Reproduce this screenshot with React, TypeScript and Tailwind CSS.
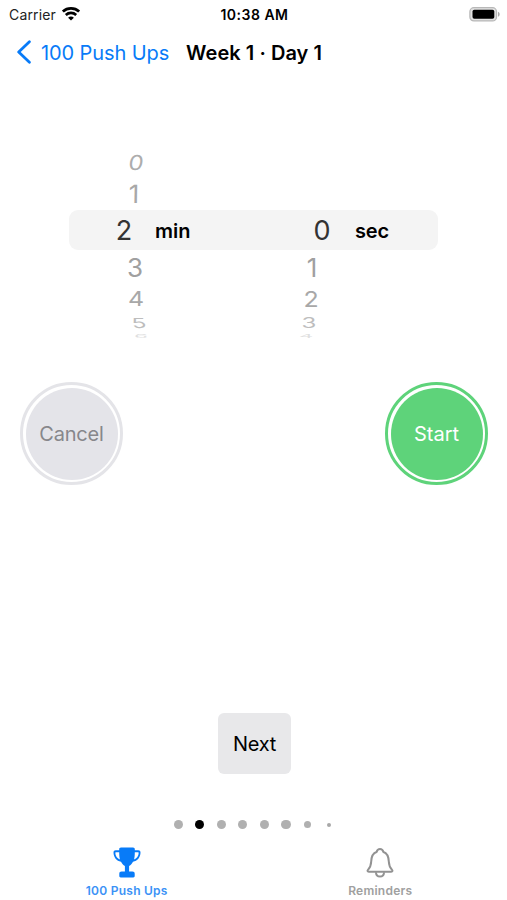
const wheel = [
  { row: "h-[32px] text-[24px] text-[#adadad]", min: "0", minAt: "ml-[126px] translate-y-px scale-y-[0.86] -skew-x-[7deg]", sec: "", secAt: "ml-[302px]" },
  { row: "h-[32px] text-[26px] text-[#a8a8a8]", min: "1", minAt: "ml-[124px] scale-y-[0.96] -skew-x-[1deg]", sec: "", secAt: "ml-[302px]" },
];

const lowerWheel = [
  { row: "h-[34px] text-[26px] text-[#a0a0a0]", min: "3", minAt: "ml-[125px] translate-y-px scale-y-[0.96]", sec: "1", secAt: "ml-[157px] translate-y-px scale-y-[0.96]" },
  { row: "h-[30px] text-[25px] text-[#a8a8a8]", min: "4", minAt: "ml-[126px] scale-y-[0.82]", sec: "2", secAt: "ml-[155px] scale-y-[0.84]" },
  { row: "h-[17px] text-[24px] text-[#bdbdbd]", min: "5", minAt: "ml-[129px] scale-y-[0.58] skew-x-[6deg]", sec: "3", secAt: "ml-[150px] scale-y-[0.58]" },
  { row: "h-[10px] text-[22px] text-[#e0e0e0]", min: "6", minAt: "ml-[131px] scale-y-[0.22]", sec: "4", secAt: "ml-[145px] scale-y-[0.22]" },
];

const dots = [
  "ml-0 size-[9px] bg-[#b0b0b0]",
  "ml-[12px] size-[9.5px] bg-black",
  "ml-[12.5px] size-[9px] bg-[#b0b0b0]",
  "ml-[12.5px] size-[9px] bg-[#b0b0b0]",
  "ml-[12.5px] size-[9px] bg-[#b0b0b0]",
  "ml-[12.5px] size-[9.5px] bg-[#b0b0b0]",
  "ml-[13px] size-[7px] bg-[#b0b0b0]",
  "ml-[16px] size-[4px] bg-[#a8a8a8]",
];

function WheelRow({ item }: { item: (typeof wheel)[number] }) {
  return (
    <div className={`flex items-center leading-none ${item.row}`}>
      <span className={`block w-5 text-center ${item.minAt}`}>{item.min}</span>
      <span className={`block w-5 text-center ${item.secAt}`}>{item.sec}</span>
    </div>
  );
}

function Wifi() {
  return (
    <svg width="18" height="14" viewBox="0 0 18 14" fill="none" stroke="black" strokeWidth="2.7">
      <path d="M.9 4.600C5.300.4 12.700.4 17.100 4.600" />
      <path d="M3.800 7.900c3-2.700 7.400-2.700 10.400 0" />
      <path d="M9 13.500 6.100 10.700c1.700-1.500 4.100-1.500 5.800 0Z" fill="black" stroke="none" />
    </svg>
  );
}

function Battery() {
  return (
    <svg width="31" height="15" viewBox="0 0 31 15">
      <rect x=".9" y=".7" width="26.6" height="13.2" rx="4" fill="#e2e2e2" stroke="#b8b8b8" strokeWidth="1.3" />
      <rect x="3.500" y="2.800" width="21.800" height="9" rx="1.800" fill="black" />
      <path d="M29 4.800c2.200.8 2.200 4.200 0 5Z" fill="#ababab" />
    </svg>
  );
}

function Trophy() {
  return (
    <svg width="28" height="31" viewBox="0 0 28 31" fill="#087bf8">
      <path d="M8 .5h12c1.200 0 1.800.7 1.800 1.800v1h3.500c1.400 0 2.200.8 2.200 2.200 0 4.600-3.100 8.700-7.500 9.200-1 1.900-2.200 3.300-3.900 4.200v5.600h3.300c1.500 0 2.300.8 2.300 2.300v2.300c0 .9-.5 1.400-1.400 1.400H7.700c-.9 0-1.400-.5-1.400-1.400v-2.300c0-1.500.8-2.300 2.300-2.300h3.300v-5.600C10.200 18 9 16.600 8 14.700 3.600 14.200.5 10.100.5 5.500c0-1.400.8-2.200 2.200-2.200h3.500v-1C6.200 1.200 6.800.5 8 .5ZM6.200 5.200H2.900c-.4 0-.6.2-.6.600 0 3.200 2 5.900 4.700 6.800-.6-2-.8-4.500-.8-7.400Zm15.600 0c0 2.900-.2 5.400-.8 7.400 2.700-.9 4.700-3.600 4.700-6.800 0-.4-.2-.6-.6-.6Z" />
    </svg>
  );
}

function Bell() {
  return (
    <svg width="28" height="30" viewBox="0 0 28 30" fill="none" stroke="#929292" strokeWidth="2" strokeLinejoin="round">
      <path d="M2.800 23.800h22.400c1.400 0 1.700-1.200.7-2.200-2.200-2.200-2.900-4.100-3.100-8.100-.2-5-1.600-8.300-5.400-9.500C16.900 2.200 15.800 1 14 1s-2.900 1.200-3.400 3C6.800 5.200 5.400 8.500 5.200 13.500c-.2 4-.9 5.900-3.100 8.100-1 1-.7 2.200.7 2.200Z" />
      <path d="M9.900 24.200c.2 2.800 1.800 4.400 4.100 4.400s3.900-1.600 4.100-4.400" />
    </svg>
  );
}

export default function App() {
  return (
    <main className="flex h-[900px] w-[507px] flex-col overflow-hidden bg-white font-['Inter',sans-serif] text-black">
      <header>
        <div className="grid h-7 grid-cols-3 items-center pl-[9px] pr-[7px] text-[14px]">
          <div className="flex items-center gap-[6px] text-[#222]">
            <span className="tracking-[0.15px]">Carrier</span>
            <Wifi />
          </div>
          <time className="text-center font-semibold tracking-[0.5px]">10:38 AM</time>
          <div className="flex justify-end"><Battery /></div>
        </div>
        <nav className="flex h-12 items-center pl-[17px] text-[20px]">
          <button className="flex items-center gap-[10px] text-[#087bf8]">
            <svg width="14" height="24" viewBox="0 0 14 24" fill="none" stroke="currentColor" strokeWidth="2.800" strokeLinecap="round" strokeLinejoin="round"><path d="M12.400 1.800 1.700 12l10.700 10.200" /></svg>
            <span className="whitespace-nowrap pt-px tracking-[-0.1px]">100 Push Ups</span>
          </button>
          <h1 className="ml-[17px] whitespace-nowrap pt-px font-semibold tracking-[0.05px]">Week 1 · Day 1</h1>
        </nav>
      </header>

      <section className="mt-[70px] h-[200px]">
        {wheel.map((item) => <WheelRow key={item.min} item={item} />)}
        <div className="mx-[69px] flex h-10 items-center rounded-[9px] bg-[#f4f4f4] pt-px text-[20px] font-semibold">
          <span className="ml-[45px] block w-5 pt-px text-center text-[27px] font-normal leading-[32px] text-[#333]">2</span>
          <span className="ml-[21px] w-[36px]">min</span>
          <span className="ml-[121px] block w-5 pt-px text-center text-[27px] font-normal leading-[32px] text-[#333]">0</span>
          <span className="ml-[23px] tracking-[-0.2px]">sec</span>
        </div>
        {lowerWheel.map((item) => <WheelRow key={item.min} item={item} />)}
      </section>

      <section className="mt-[36px] flex justify-between pl-[20px] pr-[19px] text-[20px]">
        <button className="size-[103px] rounded-full border-[3px] border-[#e4e4e8] p-[2.5px] text-[#87878b]">
          <span className="flex size-full items-center justify-center rounded-full bg-[#e4e4e9] pt-px tracking-[-0.2px]">Cancel</span>
        </button>
        <button className="size-[103px] rounded-full border-[3px] border-[#5ed37a] p-[2.5px] text-white">
          <span className="flex size-full items-center justify-center rounded-full bg-[#5ed37a] pt-px">Start</span>
        </button>
      </section>

      <button className="ml-[218px] mt-[228px] h-[61px] w-[73px] rounded-[6px] bg-[#e8e8ea] text-[20px] tracking-[-0.3px]">Next</button>

      <div className="mt-[45px] flex h-[11px] items-center pl-[173.5px]">
        {dots.map((dot, index) => <i key={index} className={`block shrink-0 rounded-full ${dot}`} />)}
      </div>

      <footer className="mt-[17px] grid grid-cols-2 text-[12px] font-semibold">
        <button className="flex h-[53px] flex-col items-center text-[#3b92f6]">
          <Trophy />
          <span className="mt-[5px] leading-[15px] tracking-[0.25px]">100 Push Ups</span>
        </button>
        <button className="flex h-[53px] flex-col items-center pt-px text-[#a0a0a0]">
          <Bell />
          <span className="mt-[5px] leading-[15px] tracking-[0.25px]">Reminders</span>
        </button>
      </footer>
    </main>
  );
}
